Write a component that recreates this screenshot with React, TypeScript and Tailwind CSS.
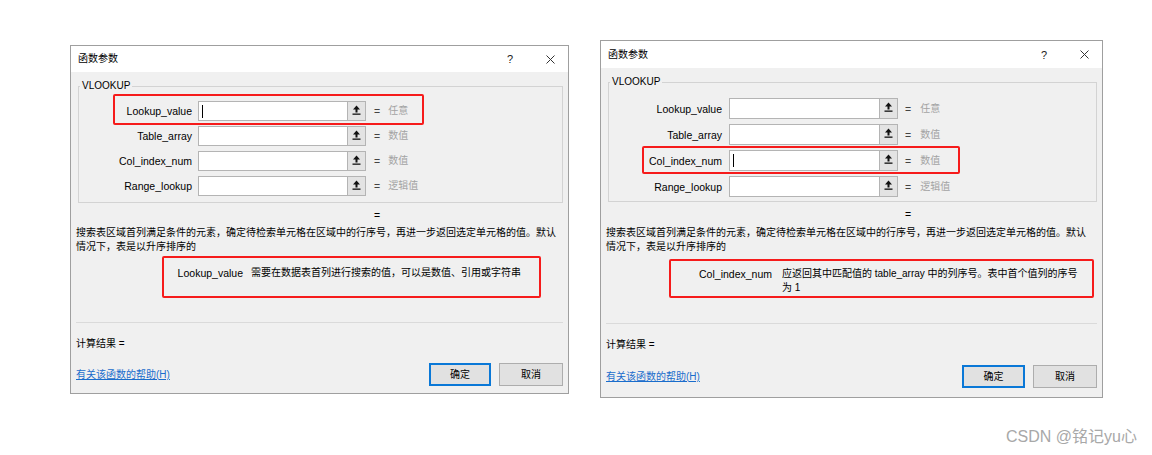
import React from "react";

type Cfg = {
  box: string;
  title: string;
  rows: string;
  rowH: string;
  field: string;
  inputMl: string;
  eqMl: string;
  valMl: string;
  eqLine: string;
  desc: string;
  param: string;
  labW: string;
  descMl: string;
  calcMt: string;
  btnMt: string;
  bottom: string;
  okW: string;
  cancelW: string;
  red1: string;
  red2: string;
  caretRow: number;
  paramLabel: string;
  paramDesc: React.ReactNode;
};

const FONT = { fontFamily: '"Liberation Sans", "Noto Sans CJK SC", sans-serif' };

const ROWS = [
  { label: "Lookup_value", value: "任意" },
  { label: "Table_array", value: "数值" },
  { label: "Col_index_num", value: "数值" },
  { label: "Range_lookup", value: "逻辑值" },
];

function RefIcon() {
  return (
    <svg width="9" height="11" viewBox="0 0 9 11">
      <polygon points="4.5,0.5 8,4.5 1,4.5" fill="#111" />
      <rect x="3.5" y="4" width="2" height="3.5" fill="#111" />
      <rect x="0.5" y="8.5" width="8" height="1.3" fill="#111" />
    </svg>
  );
}

function Dialog({ c }: { c: Cfg }) {
  return (
    <div className={`relative flex flex-col border border-[#9f9f9f] bg-[#f0f0f0] text-black ${c.box}`} style={FONT}>
      <div className={`flex items-center bg-white pl-[7px] pr-[13px] ${c.title}`}>
        <span className="text-[10px] leading-[14px]">函数参数</span>
        <span className="ml-auto text-[11px] leading-[14px] text-[#222]">?</span>
        <svg className="ml-[33px]" width="9" height="9" viewBox="0 0 9 9">
          <path d="M0.5 0.5 L8.5 8.5 M8.5 0.5 L0.5 8.5" stroke="#333" strokeWidth="1" />
        </svg>
      </div>

      <div className="mt-[7px] pl-[7px] pr-[5px]">
        <fieldset className="border border-[#d3d3d3]">
          <legend className="ml-[1px] px-[2px] text-[10px] leading-[14px]">VLOOKUP</legend>
          <div className={`flex flex-col ${c.rows}`}>
            {ROWS.map((r, i) => (
              <div key={r.label} className={`flex items-center ${c.rowH}`}>
                <div className="w-[113px] text-right text-[10.5px] leading-[14px]">{r.label}</div>
                <div className={`flex h-full border border-[#b4b4b4] bg-white ${c.field} ${c.inputMl}`}>
                  <div className="flex flex-1 items-center">
                    {i === c.caretRow && <span className="ml-[3px] h-[13px] w-px bg-black" />}
                  </div>
                  <div className="flex w-[18px] items-start justify-center border-l border-[#b4b4b4] bg-[#e3e3e3] pt-[3px]">
                    <RefIcon />
                  </div>
                </div>
                <span className={`text-[10.5px] leading-[14px] text-[#444] ${c.eqMl}`}>=</span>
                <span className={`text-[10px] leading-[14px] text-[#a3a3a3] ${c.valMl}`}>{r.value}</span>
              </div>
            ))}
          </div>
        </fieldset>
      </div>

      <div className={`h-[14px] text-[10.5px] leading-[14px] ${c.eqLine}`}>=</div>

      <div className={`whitespace-nowrap pl-[5px] text-[10px] leading-[14px] ${c.desc}`}>
        搜索表区域首列满足条件的元素，确定待检索单元格在区域中的行序号，再进一步返回选定单元格的值。默认
        <br />
        情况下，表是以升序排序的
      </div>

      <div className={`flex ${c.param}`}>
        <div className={`shrink-0 text-right text-[10.5px] leading-[14px] ${c.labW}`}>{c.paramLabel}</div>
        <div className={`whitespace-nowrap text-[10px] leading-[14px] ${c.descMl}`}>{c.paramDesc}</div>
      </div>

      <div className={`mt-auto flex flex-col ${c.bottom}`}>
        <div className="mx-[5px] h-px bg-[#dadada]" />
        <div className={`pl-[5px] text-[10px] leading-[14px] ${c.calcMt}`}>计算结果 =</div>
        <div className={`flex items-center pl-[5px] pr-[5px] ${c.btnMt}`}>
          <span className="text-[10px] leading-[14px] text-[#1a6dcc] underline">有关该函数的帮助(H)</span>
          <div className="ml-auto flex gap-[8px]">
            <div className={`flex h-[23px] items-center justify-center border-2 border-[#0a78d7] bg-[#e1e1e1] text-[10px] ${c.okW}`}>
              确定
            </div>
            <div className={`flex h-[23px] items-center justify-center border border-[#adadad] bg-[#e1e1e1] text-[10px] ${c.cancelW}`}>
              取消
            </div>
          </div>
        </div>
      </div>

      <div className={`absolute rounded-[2px] border-2 border-[#f61b1b] ${c.red1}`} />
      <div className={`absolute rounded-[2px] border-2 border-[#f61b1b] ${c.red2}`} />
    </div>
  );
}

const D1: Cfg = {
  box: "mt-[45px] w-[499px] h-[349px]",
  title: "h-[26px]",
  rows: "pt-[8px] pb-[6px] gap-[5px]",
  rowH: "h-[20px]",
  field: "w-[168px]",
  inputMl: "ml-[6px]",
  eqMl: "ml-[8px]",
  valMl: "ml-[8px]",
  eqLine: "mt-[5px] pl-[303px]",
  desc: "mt-[4px]",
  param: "mt-[12px]",
  labW: "w-[172px]",
  descMl: "ml-[8px]",
  calcMt: "mt-[14px]",
  btnMt: "mt-[12px]",
  bottom: "pb-[7px]",
  okW: "w-[62px]",
  cancelW: "w-[64px]",
  red1: "left-[42px] top-[48px] w-[311px] h-[31px]",
  red2: "left-[91px] top-[210px] w-[379px] h-[42px]",
  caretRow: 0,
  paramLabel: "Lookup_value",
  paramDesc: "需要在数据表首列进行搜索的值，可以是数值、引用或字符串",
};

const D2: Cfg = {
  box: "mt-[40px] w-[503px] h-[358px]",
  title: "h-[27px]",
  rows: "pt-[9px] pb-[4px] gap-[5px]",
  rowH: "h-[21px]",
  field: "w-[169px]",
  inputMl: "ml-[7px]",
  eqMl: "ml-[7px]",
  valMl: "ml-[9px]",
  eqLine: "mt-[5px] pl-[304px]",
  desc: "mt-[5px]",
  param: "mt-[13px]",
  labW: "w-[171px]",
  descMl: "ml-[10px]",
  calcMt: "mt-[14px]",
  btnMt: "mt-[13px]",
  bottom: "pb-[9px]",
  okW: "w-[63px]",
  cancelW: "w-[64px]",
  red1: "left-[41px] top-[105px] w-[318px] h-[28px]",
  red2: "left-[68px] top-[218px] w-[425px] h-[39px]",
  caretRow: 2,
  paramLabel: "Col_index_num",
  paramDesc: (
    <>
      应返回其中匹配值的 table_array 中的列序号。表中首个值列的序号
      <br />
      为 1
    </>
  ),
};

export default function App() {
  return (
    <div className="relative h-[455px] w-[1152px] overflow-hidden bg-white">
      <div className="flex items-start gap-[31px] pl-[70px]">
        <Dialog c={D1} />
        <Dialog c={D2} />
      </div>
      <div
        className="absolute right-[15px] top-[428px] text-[16px] leading-[18px] text-[#a8a8a8]"
        style={FONT}
      >
        CSDN @铭记yu心
      </div>
    </div>
  );
}
